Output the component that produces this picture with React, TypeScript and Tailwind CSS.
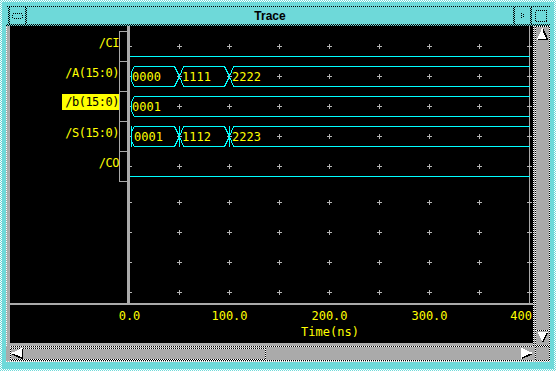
import React from "react";

const CK_WC =
  "bg-[image:repeating-conic-gradient(#ffffff_0_25%,#6ed9d9_0_50%)] bg-[length:2px_2px]";
const CK_BC =
  "bg-[image:repeating-conic-gradient(#000000_0_25%,#6ed9d9_0_50%)] bg-[length:2px_2px]";
const CK_BW =
  "bg-[image:repeating-conic-gradient(#000000_0_25%,#ffffff_0_50%)] bg-[length:2px_2px]";
const CK_WG =
  "bg-[image:repeating-conic-gradient(#ffffff_0_25%,#aaaaaa_0_50%)] bg-[length:2px_2px]";

const CYAN = "#00ffff";
const YEL = "#ffff00";
const GRID = "#b4b4b4";
const MONO = "DejaVu Sans Mono";

const PX = [-1, 49, 99, 149, 199, 249, 299, 349, 399];
const PY = [20, 50, 80, 110, 140, 176, 206, 236, 266];

function Plus({ x, y }: { x: number; y: number }) {
  return (
    <g fill={GRID}>
      <rect x={x - 2} y={y} width={5} height={1} />
      <rect x={x} y={y - 2} width={1} height={5} />
    </g>
  );
}

function segPath(a: number, b: number, t: number, u: number): string {
  const m = (t + u) / 2;
  const h = 0.5;
  const P = (x: number, y: number) => `${x + h} ${y + h}`;
  const left =
    a === 0
      ? [P(4, t), P(1, t + 5), P(1, u - 5), P(4, u)]
      : [P(a + 4, t), P(a, m), P(a + 4, u)];
  const closed = b !== 399;
  const rt = closed ? P(b - 5, t) : P(399, t);
  const rb = closed ? P(b - 5, u) : P(399, u);
  let d = `M ${rt} L ${left.join(" L ")} L ${rb}`;
  if (closed) d += ` L ${P(b, m)} L ${rt}`;
  return d;
}

function Bus({
  t,
  u,
  segs,
  vert,
}: {
  t: number;
  u: number;
  segs: { a: number; b: number; v: string; tx: number }[];
  vert?: boolean;
}) {
  const m = (t + u) / 2;
  return (
    <g>
      {segs.map((s, i) => (
        <path key={i} d={segPath(s.a, s.b, t, u)} fill="none" stroke={CYAN} strokeWidth={1} />
      ))}
      {vert &&
        [1, 49, 99].map((x) => (
          <rect key={x} x={x} y={t} width={1} height={u - t + 1} fill={CYAN} />
        ))}
      {segs.map((s, i) => (
        <text
          key={"t" + i}
          x={s.tx}
          y={m + 5}
          fill={YEL}
          fontFamily={MONO}
          fontSize={12}
        >
          {s.v}
        </text>
      ))}
    </g>
  );
}

function Wave() {
  return (
    <svg width={403} height={277} className="block bg-black" shapeRendering="crispEdges">
      <rect x={399} y={0} width={1} height={277} fill="#a9a9a9" />
      {PY.map((y) => PX.map((x) => <Plus key={`${x}-${y}`} x={x} y={y} />))}
      <rect x={0} y={30} width={400} height={1} fill={CYAN} />
      <Bus
        t={40}
        u={60}
        segs={[
          { a: 0, b: 49, v: "0000", tx: 2 },
          { a: 49, b: 99, v: "1111", tx: 52 },
          { a: 99, b: 399, v: "2222", tx: 102 },
        ]}
      />
      <Bus t={70} u={90} segs={[{ a: 0, b: 399, v: "0001", tx: 2 }]} />
      <Bus
        t={100}
        u={120}
        vert
        segs={[
          { a: 0, b: 49, v: "0001", tx: 4 },
          { a: 49, b: 99, v: "1112", tx: 52 },
          { a: 99, b: 399, v: "2223", tx: 102 },
        ]}
      />
      <rect x={0} y={150} width={400} height={1} fill={CYAN} />
    </svg>
  );
}

function Axis() {
  const labels = ["0.0", "100.0", "200.0", "300.0"];
  return (
    <svg width={523} height={38} className="block bg-black">
      {labels.map((l, i) => (
        <text
          key={l}
          x={119.5 + 100 * i}
          y={15}
          textAnchor="middle"
          fill={YEL}
          fontFamily={MONO}
          fontSize={12}
        >
          {l}
        </text>
      ))}
      <text x={522} y={15} textAnchor="end" fill={YEL} fontFamily={MONO} fontSize={12}>
        400
      </text>
      <text x={320} y={31} textAnchor="middle" fill={YEL} fontFamily={MONO} fontSize={12}>
        Time(ns)
      </text>
    </svg>
  );
}

function Names() {
  const labels = ["/CI", "/A(15:0)", "/b(15:0)", "/S(15:0)", "/CO"];
  return (
    <div className="w-[117px] h-full bg-black flex overflow-hidden">
      <div className="flex-1 flex flex-col pt-[5px] font-['DejaVu_Sans_Mono',monospace] text-[12px] text-[#ffff00] tracking-[-0.5px]">
        {labels.map((l, i) =>
          i === 2 ? (
            <div key={l} className="h-[30px] flex justify-end items-start">
              <span className="mt-[3px] leading-[16px] h-[16px] pl-[3px] bg-[#ffff00] text-black whitespace-nowrap">
                {l}
              </span>
            </div>
          ) : (
            <div key={l} className="h-[30px] flex justify-end items-start">
              <span className="mt-[5px] leading-[14px] whitespace-nowrap">{l}</span>
            </div>
          )
        )}
      </div>
      <div className="w-[8px] mt-[5px] self-start border-t border-l border-[#a9a9a9] flex flex-col">
        {[0, 1, 2, 3, 4].map((i) => (
          <div key={i} className="h-[30px] border-b border-[#a9a9a9]" />
        ))}
      </div>
    </div>
  );
}

function ArrowUp() {
  return (
    <svg width={11} height={12} className="block" shapeRendering="crispEdges">
      <polygon points="5.5,0.5 0.5,11.5 10.5,11.5" fill="#ffffff" />
      <path d="M5.5 0.5 L10.5 11.5 L0.5 11.5" fill="none" stroke="#000" strokeWidth={1.5} />
      <path d="M5.5 0.5 L0.5 11.5" fill="none" stroke="#fff" strokeWidth={1} />
    </svg>
  );
}

function ArrowDown() {
  return (
    <svg width={11} height={11} className="block" shapeRendering="crispEdges">
      <polygon points="0.5,0.5 10.5,0.5 5.5,10.5" fill="#ffffff" />
      <path d="M10.5 0.5 L5.5 10.5" fill="none" stroke="#000" strokeWidth={1.5} />
      <path d="M0.5 0.5 L10.5 0.5" fill="none" stroke="#fff" strokeWidth={1} />
    </svg>
  );
}

function ArrowLeft() {
  return (
    <svg width={13} height={11} className="block" shapeRendering="crispEdges">
      <polygon points="0.5,5.5 11.5,0.5 11.5,10.5" fill="#ffffff" />
      <path d="M0.5 5.5 L11.5 10.5 L11.5 0.5" fill="none" stroke="#000" strokeWidth={1.5} />
      <path d="M0.5 5.5 L11.5 0.5" fill="none" stroke="#fff" strokeWidth={1} />
    </svg>
  );
}

function ArrowRight() {
  return (
    <svg width={12} height={11} className="block" shapeRendering="crispEdges">
      <polygon points="0.5,0.5 11.5,5.5 0.5,10.5" fill="#ffffff" />
      <path d="M11.5 5.5 L0.5 10.5" fill="none" stroke="#000" strokeWidth={1.5} />
      <path d="M0.5 10.5 L0.5 0.5 L11.5 5.5" fill="none" stroke="#fff" strokeWidth={1} />
    </svg>
  );
}

function TitleBar() {
  return (
    <div className={`h-[20px] shrink-0 pt-[1px] pb-[2px] ${CK_BC}`}>
      <div className="h-full bg-[#6ed9d9] flex">
        <div className="w-[2px]" />
        <div className={`w-[19px] px-[2px] ${CK_BC}`}>
          <div className="h-full bg-[#6ed9d9] flex items-center justify-center">
            <svg width={11} height={6} className="block" shapeRendering="crispEdges">
              <rect
                x={0.5}
                y={0.5}
                width={10}
                height={5}
                rx={2}
                fill="none"
                stroke="#000"
                strokeDasharray="1 1"
              />
            </svg>
          </div>
        </div>
        <div className="flex-1 flex items-center justify-center font-['Liberation_Sans',Arial,sans-serif] font-bold text-[12px] leading-none text-black">
          Trace
        </div>
        <div className={`w-[17px] pl-[2px] ${CK_BC}`}>
          <div className="h-full bg-[#6ed9d9] flex items-center justify-center">
            <svg width={3} height={5} className="block" shapeRendering="crispEdges">
              <rect x={0} y={0} width={1} height={1} fill="#000" />
              <rect x={2} y={1} width={1} height={1} fill="#000" />
              <rect x={0} y={2} width={1} height={1} fill="#000" />
              <rect x={2} y={3} width={1} height={1} fill="#000" />
              <rect x={0} y={4} width={1} height={1} fill="#000" />
            </svg>
          </div>
        </div>
        <div className={`w-[20px] pl-[2px] ${CK_BC}`}>
          <div className="h-full bg-[#6ed9d9] flex items-center justify-center">
            <svg width={12} height={12} className="block" shapeRendering="crispEdges">
              <rect
                x={0.5}
                y={0.5}
                width={11}
                height={11}
                fill="none"
                stroke="#000"
                strokeDasharray="1 1"
              />
            </svg>
          </div>
        </div>
      </div>
    </div>
  );
}

function Body() {
  return (
    <div className="flex-1 flex flex-col bg-[#aaaaaa]">
      <div className="h-[320px] flex">
        <div className={`w-[4px] pl-[1px] ${CK_WG}`}>
          <div className="h-full bg-[#aaaaaa]" />
        </div>
        <div className="w-[523px] flex flex-col">
          <div className="h-[277px] flex">
            <Names />
            <div className="w-[3px] bg-[#aaaaaa]" />
            <Wave />
          </div>
          <div className="h-[2px]" />
          <Axis />
        </div>
        <div className={`w-[2px] pl-[1px] ${CK_BW}`}>
          <div className="h-full bg-[#aaaaaa]" />
        </div>
        <div className={`w-[15px] p-[1px] ${CK_BW}`}>
          <div className="h-full bg-[#aaaaaa] flex flex-col items-center">
            <div className="mt-[1px]">
              <ArrowUp />
            </div>
            <div className="flex-1" />
            <div className={`w-full h-[1px] ${CK_BW}`} />
            <div className="mt-[1px] mb-[2px]">
              <ArrowDown />
            </div>
          </div>
        </div>
      </div>
      <div className={`h-[16px] flex pb-[1px] ${CK_WG}`}>
        <div className="w-[4px] bg-[#aaaaaa]" />
        <div className={`w-[523px] pt-[1px] pb-[1px] ${CK_BW}`}>
          <div className="h-full bg-[#aaaaaa] flex items-center">
            <div className={`w-[256px] h-[12px] p-[1px] ${CK_BW}`}>
              <div className="h-full bg-[#aaaaaa] flex items-center">
                <ArrowLeft />
              </div>
            </div>
            <div className="flex-1" />
            <ArrowRight />
          </div>
        </div>
        <div className="w-[2px] bg-[#aaaaaa]" />
        <div className={`w-[15px] p-[1px] ${CK_BW}`}>
          <div className="h-full bg-[#aaaaaa]" />
        </div>
      </div>
    </div>
  );
}

export default function App() {
  return (
    <div className={`w-[556px] h-[371px] p-[2px] ${CK_WC}`}>
      <div className="w-full h-full bg-[#6ed9d9] pt-[4px] px-[4px] pb-[7px] flex flex-col">
        <TitleBar />
        <Body />
      </div>
    </div>
  );
}
